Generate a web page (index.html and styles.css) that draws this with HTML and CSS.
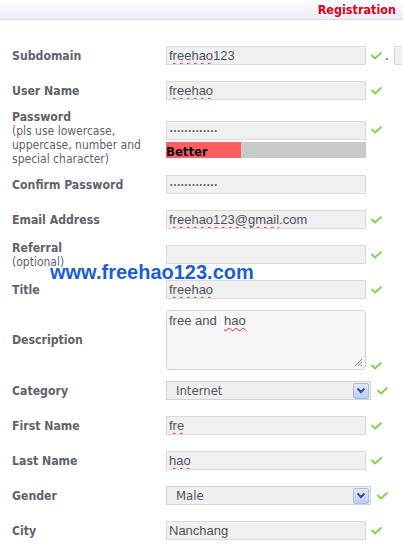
FILE: index.html
```html
<!DOCTYPE html>
<html>
<head>
<meta charset="utf-8">
<link rel="stylesheet" href="styles.css">
</head>
<body>
<div class="header"><span class="title">Registration</span></div>
<div class="form">
  <div class="row">
    <div class="label">Subdomain</div>
    <div class="field">
      <div class="input"><span class="sp">freehao</span>123</div>
      <svg class="ok" width="11" height="8" viewBox="0 0 11 8"><path d="M1 3.5 L4 6.5 L10 1" /></svg>
      <span class="dot"></span>
      <div class="input input-domain"></div>
    </div>
  </div>
  <div class="row">
    <div class="label">User Name</div>
    <div class="field">
      <div class="input"><span class="sp">freehao</span></div>
      <svg class="ok" width="11" height="8" viewBox="0 0 11 8"><path d="M1 3.5 L4 6.5 L10 1" /></svg>
    </div>
  </div>
  <div class="row row-pass">
    <div class="label">Password<span class="note">(pls use lowercase, uppercase, number and special character)</span></div>
    <div class="field field-pass">
      <div class="pass-col">
        <div class="input pw">•••••••••••••</div>
        <div class="strength"><div class="strength-fill" style="width:75px"></div><span class="strength-text">Better</span></div>
      </div>
      <svg class="ok ok-pass" width="11" height="8" viewBox="0 0 11 8"><path d="M1 3.5 L4 6.5 L10 1" /></svg>
    </div>
  </div>
  <div class="row">
    <div class="label">Confirm Password</div>
    <div class="field">
      <div class="input pw">•••••••••••••</div>
    </div>
  </div>
  <div class="row">
    <div class="label">Email Address</div>
    <div class="field">
      <div class="input"><span class="sp">freehao123@gmail</span>.com</div>
      <svg class="ok" width="11" height="8" viewBox="0 0 11 8"><path d="M1 3.5 L4 6.5 L10 1" /></svg>
    </div>
  </div>
  <div class="row">
    <div class="label">Referral<span class="note">(optional)</span></div>
    <div class="field">
      <div class="input"></div>
      <svg class="ok" width="11" height="8" viewBox="0 0 11 8"><path d="M1 3.5 L4 6.5 L10 1" /></svg>
    </div>
  </div>
  <div class="row">
    <div class="label">Title</div>
    <div class="field">
      <div class="input"><span class="sp">freehao</span></div>
      <svg class="ok" width="11" height="8" viewBox="0 0 11 8"><path d="M1 3.5 L4 6.5 L10 1" /></svg>
    </div>
  </div>
  <div class="row row-desc">
    <div class="label">Description</div>
    <div class="field field-desc">
      <div class="textarea">free and &nbsp;<span class="sp">hao</span>
        <svg class="grip" width="9" height="9" viewBox="0 0 9 9"><path d="M8 1 L1 8 M8 4 L4 8 M8 7 L7 8" /></svg>
      </div>
      <svg class="ok" width="11" height="8" viewBox="0 0 11 8"><path d="M1 3.5 L4 6.5 L10 1" /></svg>
    </div>
  </div>
  <div class="row">
    <div class="label">Category</div>
    <div class="field">
      <div class="select"><span class="select-text">Internet</span><span class="drop"><svg width="10" height="7" viewBox="0 0 10 7"><path d="M1.5 1.5 L5 5 L8.5 1.5" /></svg></span></div>
      <svg class="ok ok-sel" width="11" height="8" viewBox="0 0 11 8"><path d="M1 3.5 L4 6.5 L10 1" /></svg>
    </div>
  </div>
  <div class="row">
    <div class="label">First Name</div>
    <div class="field">
      <div class="input"><span class="sp">fre</span></div>
      <svg class="ok" width="11" height="8" viewBox="0 0 11 8"><path d="M1 3.5 L4 6.5 L10 1" /></svg>
    </div>
  </div>
  <div class="row">
    <div class="label">Last Name</div>
    <div class="field">
      <div class="input"><span class="sp">hao</span></div>
      <svg class="ok" width="11" height="8" viewBox="0 0 11 8"><path d="M1 3.5 L4 6.5 L10 1" /></svg>
    </div>
  </div>
  <div class="row">
    <div class="label">Gender</div>
    <div class="field">
      <div class="select"><span class="select-text">Male</span><span class="drop"><svg width="10" height="7" viewBox="0 0 10 7"><path d="M1.5 1.5 L5 5 L8.5 1.5" /></svg></span></div>
      <svg class="ok ok-sel" width="11" height="8" viewBox="0 0 11 8"><path d="M1 3.5 L4 6.5 L10 1" /></svg>
    </div>
  </div>
  <div class="row">
    <div class="label">City</div>
    <div class="field">
      <div class="input">Nanchang</div>
      <svg class="ok" width="11" height="8" viewBox="0 0 11 8"><path d="M1 3.5 L4 6.5 L10 1" /></svg>
    </div>
  </div>
  <div class="watermark">www.freehao123.com</div>
</div>
</body>
</html>
```

FILE: styles.css
```css
html, body {
  margin: 0;
  padding: 0;
  background: #fff;
  overflow: hidden;
}
body {
  width: 403px;
  height: 546px;
  font-family: "DejaVu Sans Condensed", "DejaVu Sans", sans-serif;
  font-size: 12px;
  color: #60636c;
  position: relative;
}
.header {
  height: 19px;
  border-bottom: 1px solid #dcdce9;
  background: linear-gradient(#ffffff, #ebebf6);
  display: flex;
  justify-content: flex-end;
  align-items: center;
  padding-right: 7px;
}
.title {
  color: #e0001b;
  font-weight: bold;
  font-size: 12.5px;
  line-height: 15px;
}
.form {
  padding: 18px 0 0 12px;
}
.row {
  display: flex;
  align-items: center;
  height: 35px;
}
.row-pass {
  height: 59px;
}
.row-desc {
  height: 66px;
}
.label {
  width: 154px;
  flex: none;
  font-weight: bold;
  font-size: 12.2px;
  line-height: 14px;
}
.note {
  display: block;
  font-weight: normal;
  font-size: 12px;
  line-height: 14px;
}
.field {
  display: flex;
  align-items: center;
  flex: none;
}
.field-pass {
  align-items: flex-start;
  margin-top: 4px;
}
.field-desc {
  align-items: flex-end;
}
.pass-col {
  display: flex;
  flex-direction: column;
  gap: 2px;
}
.input {
  box-sizing: border-box;
  width: 200px;
  height: 19px;
  border: 1px solid #dadada;
  background: #f0f0f0;
  font-family: "Liberation Sans", Arial, sans-serif;
  font-size: 13px;
  line-height: 17px;
  padding-left: 2px;
  color: #4e525c;
  white-space: nowrap;
  overflow: hidden;
}
.input-domain {
  width: 8px;
  flex: none;
  border-right: none;
}
.pw {
  font-size: 7px;
  letter-spacing: 1.25px;
  line-height: 17px;
  color: #555;
  padding-left: 3px;
}
.sp {
  text-decoration: underline wavy #e8202a;
  text-decoration-thickness: 1px;
  text-underline-offset: 2px;
  text-decoration-skip-ink: none;
}
.ok {
  flex: none;
  margin-left: 5px;
}
.ok path {
  fill: none;
  stroke: #7dd34f;
  stroke-width: 1.8;
  stroke-linecap: round;
  stroke-linejoin: round;
}
.ok-pass {
  margin-top: 5px;
}
.ok-sel {
  margin-left: 6px;
}
.dot {
  width: 2px;
  height: 2px;
  background: #d8820f;
  margin: 6px 6px 0 4px;
  flex: none;
}
.strength {
  width: 200px;
  height: 16px;
  background: #c9c9c9;
  position: relative;
  display: flex;
}
.strength-fill {
  height: 16px;
  background: #ff5e5e;
}
.strength-text {
  position: absolute;
  left: 0;
  bottom: 0;
  font-family: "DejaVu Sans Condensed", "DejaVu Sans", sans-serif;
  font-weight: bold;
  font-size: 13px;
  line-height: 13px;
  color: #0a0a14;
}
.textarea {
  box-sizing: border-box;
  width: 200px;
  height: 60px;
  border: 1px solid #d6d6d6;
  border-radius: 4px;
  background: #f7f7f7;
  font-family: "Liberation Sans", Arial, sans-serif;
  font-size: 13px;
  line-height: 17px;
  padding: 1px 2px;
  color: #4e525c;
  position: relative;
}
.grip {
  position: absolute;
  right: 2px;
  bottom: 2px;
}
.grip path {
  stroke: #8a8a8a;
  stroke-width: 1;
  fill: none;
}
.select {
  box-sizing: border-box;
  width: 205px;
  height: 19px;
  border: 1px solid #d2d2d2;
  background: #efefef;
  display: flex;
  align-items: center;
  justify-content: space-between;
  padding: 0 1px 0 9px;
}
.select-text {
  color: #4f535e;
  font-size: 13px;
  line-height: 17px;
}
.drop {
  box-sizing: border-box;
  width: 16px;
  height: 16px;
  border: 1px solid #a8bce6;
  border-radius: 2px;
  background: linear-gradient(#dfe8fc, #b9cdf6);
  display: flex;
  align-items: center;
  justify-content: center;
}
.drop path {
  fill: none;
  stroke: #3f4f72;
  stroke-width: 2;
}
.watermark {
  position: absolute;
  left: 50px;
  top: 262px;
  font-family: "Liberation Sans", Arial, sans-serif;
  font-weight: bold;
  font-size: 20px;
  line-height: 20px;
  color: #1a5fd1;
  white-space: nowrap;
}
```
